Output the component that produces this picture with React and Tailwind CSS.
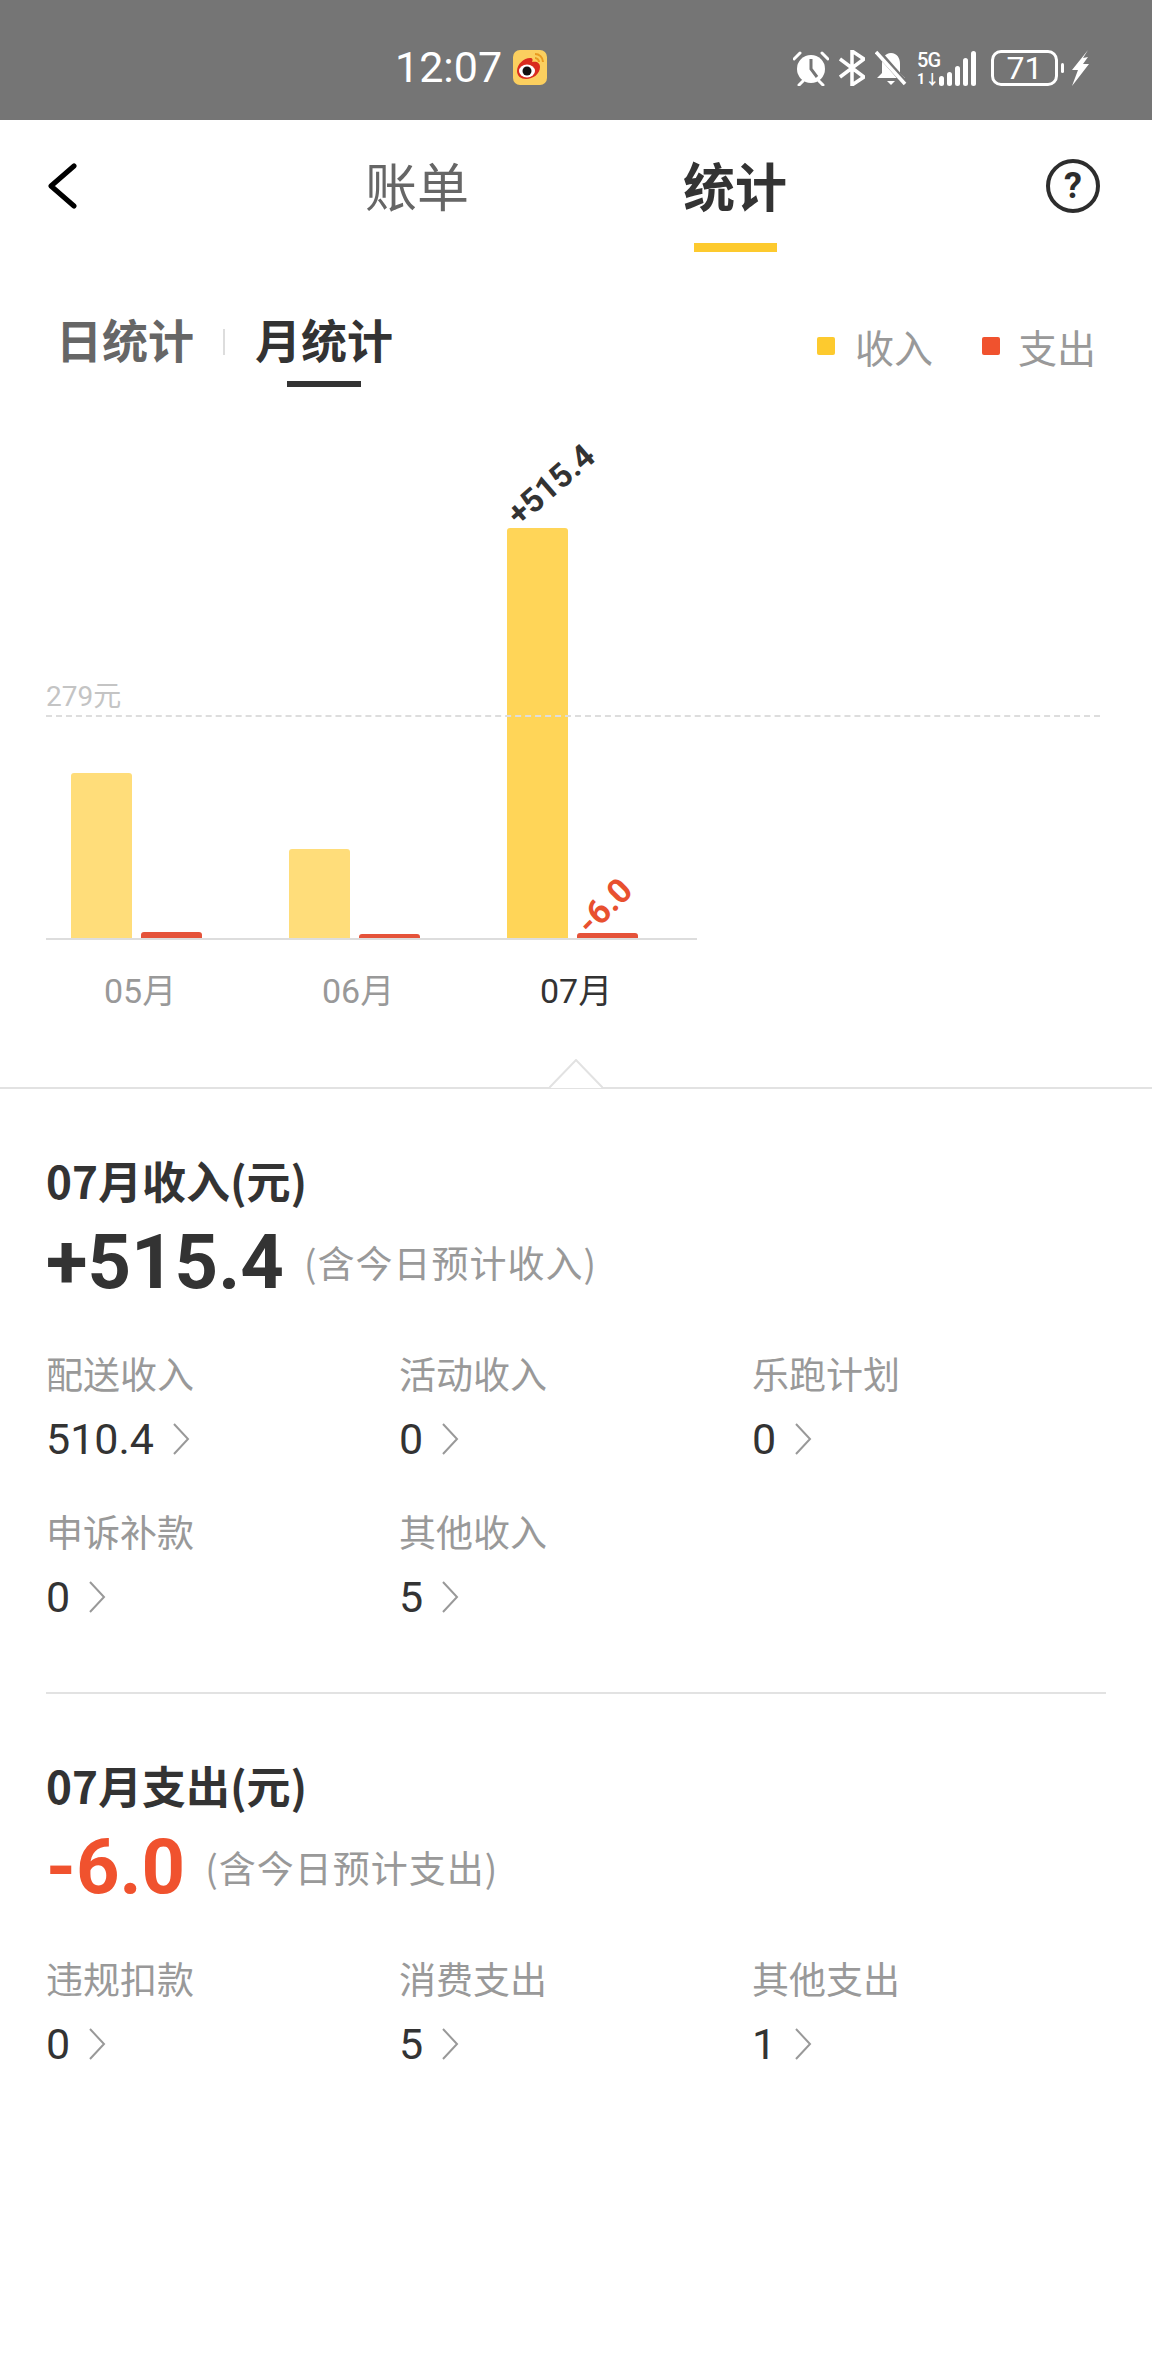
import React from "react";

const cjk = "font-['Noto_Sans_CJK_SC','Noto_Sans',sans-serif]";
const num = "font-['Roboto','Noto_Sans_CJK_SC',sans-serif]";

const months = [
  { label: "05月", income: 165, expense: 6 },
  { label: "06月", income: 89, expense: 4 },
  { label: "07月", income: 410, expense: 5, active: true },
];

const incomeItems = [
  { label: "配送收入", value: "510.4" },
  { label: "活动收入", value: "0" },
  { label: "乐跑计划", value: "0" },
  { label: "申诉补款", value: "0" },
  { label: "其他收入", value: "5" },
];

const expenseItems = [
  { label: "违规扣款", value: "0" },
  { label: "消费支出", value: "5" },
  { label: "其他支出", value: "1" },
];

const StatusIcons = () => (
  <div className="flex items-center text-white">
    <svg width="36" height="36" viewBox="0 0 36 36" fill="white">
      <circle cx="18" cy="19" r="14" />
      <path d="M18 9v10l6 8" fill="none" stroke="#757575" strokeWidth="3" />
      <path d="M1 9l6-6M35 9l-6-6M6 35l4-4M30 35l-4-4" stroke="white" strokeWidth="3" strokeLinecap="round" />
    </svg>
    <svg className="ml-[10px]" width="26" height="36" viewBox="0 0 26 36" fill="none" stroke="white" strokeWidth="3.5">
      <path d="M1 9l24 18-12 8V1l12 8L1 27" />
    </svg>
    <svg className="ml-[10px]" width="32" height="36" viewBox="0 0 32 36" fill="white">
      <path d="M16 3c6 0 9 5 9 11v9l5 5H2l5-5v-9c0-6 3-11 9-11z" />
      <path d="M12 31h8l-4 4z" />
      <path d="M3 2l28 32" stroke="#757575" strokeWidth="6" />
      <path d="M1 2l29 32" stroke="white" strokeWidth="3.5" />
    </svg>
    <div className="ml-[10px] flex h-[36px] w-[22px] flex-col justify-between">
      <span className={`${num} text-[20px] leading-[20px] font-medium tracking-[-1px]`}>5G</span>
      <span className={`${num} text-[14px] leading-[14px] font-bold`}>1↓</span>
    </div>
    <div className="flex h-[36px] items-end gap-[3px]">
      <div className="h-[10px] w-[5px] rounded-full bg-white" />
      <div className="h-[14px] w-[5px] rounded-full bg-white" />
      <div className="h-[20px] w-[5px] rounded-full bg-white" />
      <div className="h-[28px] w-[5px] rounded-full bg-white" />
      <div className="h-[35px] w-[5px] rounded-full bg-white" />
    </div>
    <div className={`${num} ml-[15px] flex h-[36px] w-[67px] items-center justify-center rounded-[10px] border-[3px] border-white text-[32px] leading-none`}>71</div>
    <div className="ml-[3px] h-[10px] w-[3px] rounded-full bg-white" />
    <svg className="ml-[6px]" width="20" height="36" viewBox="0 0 20 36" fill="white">
      <path d="M18 0L2 20h6L2 36l17-22h-6l5-7-5 1z" />
    </svg>
  </div>
);

const StatusBar = () => (
  <div className="flex h-[120px] items-center bg-[#757575] pt-[15px] pl-[395px]">
    <span className={`${num} text-[43px] leading-none text-white`}>12:07</span>
    <svg className="ml-[11px]" width="34" height="35" viewBox="0 0 34 35">
      <rect width="34" height="35" rx="7" fill="#fbcf5f" />
      <path d="M4 21c0-7 7-13 13-13 3 0 3 2 2 4 5-1 8 1 8 5 0 7-7 12-14 12-5 0-9-3-9-8z" fill="#d92b1e" />
      <ellipse cx="14" cy="21" rx="8" ry="6.5" fill="#fff" />
      <circle cx="14" cy="21" r="4.5" fill="#111" />
      <path d="M22 4c4 0 8 3 8 8M22 8c2 0 4 2 4 4" stroke="#e99a20" strokeWidth="2" fill="none" />
    </svg>
    <div className="ml-[246px]">
      <StatusIcons />
    </div>
  </div>
);

const NavBar = () => (
  <div className="flex h-[135px] items-start pt-[32px] pl-[46px]">
    <svg className="mt-[11px]" width="32" height="46" viewBox="0 0 32 46" fill="none" stroke="#000000" strokeWidth="5" strokeLinecap="round" strokeLinejoin="round">
      <path d="M28 3L5 23l23 20" />
    </svg>
    <span className={`${cjk} ml-[287px] text-[52px] leading-[66px] text-[#666666]`}>账单</span>
    <div className="ml-[214px] flex flex-col items-center">
      <span className={`${cjk} text-[52px] leading-[66px] font-bold text-[#333333]`}>统计</span>
      <div className="mt-[25px] h-[9px] w-[83px] bg-[#fdca2e]" />
    </div>
    <div className={`${num} mt-[7px] ml-[259px] flex h-[54px] w-[54px] items-center justify-center rounded-full border-[4px] border-[#2d2d2d] text-[36px] leading-none font-bold text-[#2d2d2d]`}>?</div>
  </div>
);

const SubTabs = () => (
  <div className="flex h-[132px] items-start pt-[57px] pl-[56px]">
    <span className={`${cjk} text-[46px] leading-[52px] font-bold text-[#666666]`}>日统计</span>
    <div className="mt-[17px] ml-[29px] h-[26px] w-[2px] bg-[#dddddd]" />
    <div className="ml-[30px] flex flex-col items-center">
      <span className={`${cjk} text-[46px] leading-[52px] font-bold text-[#333333]`}>月统计</span>
      <div className="mt-[17px] h-[6px] w-[74px] bg-[#333333]" />
    </div>
    <div className="mt-[9px] ml-[424px] flex items-center">
      <div className="h-[18px] w-[18px] rounded-[2px] bg-[#fdca2e]" />
      <span className={`${cjk} ml-[20px] text-[39px] leading-[50px] text-[#999999]`}>收入</span>
      <div className="ml-[49px] h-[18px] w-[18px] rounded-[2px] bg-[#f0522e]" />
      <span className={`${cjk} ml-[18px] text-[39px] leading-[50px] text-[#999999]`}>支出</span>
    </div>
  </div>
);

const BarGroup = ({ month }) => (
  <div className={`flex flex-col ${month.active ? "w-[215px]" : "w-[218px]"}`}>
    <div className="flex h-[420px] items-end gap-[9px] border-b-2 border-[#dddddd] pl-[25px]">
      <div
        className={`relative w-[61px] rounded-t-[3px] ${month.active ? "bg-[#ffd558]" : "bg-[#ffdd7a]"}`}
        style={{ height: month.income }}
      >
        {month.active && (
          <span className={`${num} absolute top-[-60px] left-[-8px] -rotate-[41deg] text-[33px] leading-none font-bold whitespace-nowrap text-[#333333]`}>+515.4</span>
        )}
      </div>
      <div
        className="relative w-[61px] rounded-t-[3px] bg-[#e5533a]"
        style={{ height: month.expense }}
      >
        {month.active && (
          <span className={`${num} absolute top-[-44px] left-[-4px] -rotate-[45deg] text-[34px] leading-none font-bold whitespace-nowrap text-[#e8502f]`}>-6.0</span>
        )}
      </div>
    </div>
    <div className={`${num} mt-[30px] pl-[58px] text-[34px] leading-[42px] ${month.active ? "text-[#333333]" : "text-[#999999]"}`}>
      {month.label}
    </div>
  </div>
);

const Chart = () => (
  <div className="relative pl-[46px]">
    <div className={`${num} absolute top-[293px] left-[46px] z-10 text-[28px] leading-[34px] text-[#c4c4c4]`}>279元</div>
    <div className="absolute top-[328px] right-[52px] left-[46px] z-10 border-t-2 border-dashed border-[#dddddd]" />
    <div className="flex h-[700px] pt-[133px]">
      {months.map((m) => (
        <BarGroup key={m.label} month={m} />
      ))}
    </div>
    <div className="absolute bottom-[-2px] left-[549px] z-10">
      <svg width="54" height="30" viewBox="0 0 54 30">
        <path d="M0 29L27 1l27 28" fill="#ffffff" stroke="#e2e2e2" strokeWidth="2" />
      </svg>
    </div>
  </div>
);

const StatGrid = ({ items }) => (
  <div className="grid grid-cols-[353px_353px_1fr] gap-y-[43px]">
    {items.map((item) => (
      <div key={item.label}>
        <div className={`${cjk} text-[37px] leading-[48px] text-[#999999]`}>{item.label}</div>
        <div className="mt-[17px] flex items-center">
          <span className={`${num} text-[43px] leading-[50px] text-[#333333]`}>{item.value}</span>
          <svg className="ml-[18px]" width="18" height="34" viewBox="0 0 18 34" fill="none" stroke="#999999" strokeWidth="2">
            <path d="M2 2l14 15L2 32" />
          </svg>
        </div>
      </div>
    ))}
  </div>
);

const Section = ({ title, amount, amountColor, note, items }) => (
  <div>
    <div className={`${cjk} text-[44px] leading-[50px] font-bold text-[#333333]`}>{title}</div>
    <div className="mt-[17px] flex items-center">
      <span className={`${num} text-[76px] leading-[80px] font-bold ${amountColor}`}>{amount}</span>
      <span className={`${cjk} ml-[20px] text-[37px] leading-[50px] tracking-[1px] text-[#999999]`}>{note}</span>
    </div>
    <div className="mt-[47px]">
      <StatGrid items={items} />
    </div>
  </div>
);

export default function App() {
  return (
    <div className="min-h-[2376px] w-[1152px] overflow-hidden bg-white">
      <StatusBar />
      <NavBar />
      <SubTabs />
      <Chart />
      <div className="border-t-2 border-[#e2e2e2] px-[46px] pt-[66px]">
        <Section
          title="07月收入(元)"
          amount="+515.4"
          amountColor="text-[#333333]"
          note="(含今日预计收入)"
          items={incomeItems}
        />
        <div className="mt-[70px] mb-[66px] border-t-2 border-[#e2e2e2]" />
        <Section
          title="07月支出(元)"
          amount="-6.0"
          amountColor="text-[#f0522e]"
          note="(含今日预计支出)"
          items={expenseItems}
        />
      </div>
    </div>
  );
}
